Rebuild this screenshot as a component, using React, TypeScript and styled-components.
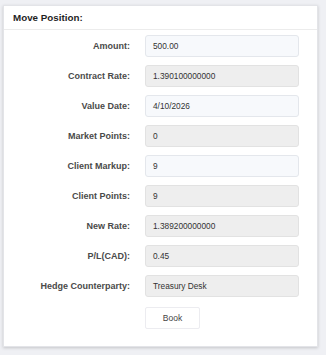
import React from 'react'
import styled, { createGlobalStyle } from 'styled-components'

const GlobalStyle = createGlobalStyle`
  html, body {
    margin: 0;
    padding: 0;
    background: #eff0f4;
    font-family: 'Liberation Sans', Arial, sans-serif;
  }
`

const Page = styled('div')`
  padding: 5px 8px 8px 3px;
  width: 326px;
  box-sizing: border-box;
`

const Panel = styled('div')`
  width: 315px;
  height: 342px;
  box-sizing: border-box;
  background: #ffffff;
  border: 1px solid #e3e4e8;
  box-shadow: 0 1px 3px rgba(0, 0, 0, 0.18);
  display: flex;
  flex-direction: column;
`

const Header = styled('div')`
  height: 23px;
  border-bottom: 1px solid #ececec;
  display: flex;
  align-items: center;
  padding-left: 9px;
  font-size: 9.8px;
  font-weight: 700;
  color: #1f1f1f;
`

const Body = styled('div')`
  display: grid;
  grid-template-columns: 126px 154px;
  column-gap: 15px;
  row-gap: 8px;
  padding-top: 5px;
  align-items: center;
`

const Label = styled('label')`
  text-align: right;
  font-size: 9px;
  font-weight: 700;
  color: #4a4a4a;
`

const Field = styled('div')<{ readOnly?: boolean }>`
  height: 22px;
  box-sizing: border-box;
  border: 1px solid ${p => (p.readOnly ? '#e2e2e2' : '#e4e7ec')};
  border-radius: 3px;
  background: ${p => (p.readOnly ? '#eeeeee' : '#f7f9fc')};
  display: flex;
  align-items: center;
  padding-left: 7px;
  font-size: 8.3px;
  color: #333;
`

const Button = styled('button')`
  grid-column: 2;
  justify-self: start;
  margin-top: 2px;
  width: 55px;
  height: 22px;
  background: #fff;
  border: 1px solid #ececf0;
  border-radius: 2px;
  font-family: inherit;
  font-size: 8.5px;
  color: #444;
  padding: 0;
`

const rows = [
  { label: 'Amount:', value: '500.00', readOnly: false },
  { label: 'Contract Rate:', value: '1.390100000000', readOnly: true },
  { label: 'Value Date:', value: '4/10/2026', readOnly: false },
  { label: 'Market Points:', value: '0', readOnly: true },
  { label: 'Client Markup:', value: '9', readOnly: false },
  { label: 'Client Points:', value: '9', readOnly: true },
  { label: 'New Rate:', value: '1.389200000000', readOnly: true },
  { label: 'P/L(CAD):', value: '0.45', readOnly: true },
  { label: 'Hedge Counterparty:', value: 'Treasury Desk', readOnly: true },
]

const App = () => (
  <Page>
    <GlobalStyle />
    <Panel>
      <Header>Move Position:</Header>
      <Body>
        {rows.map(r => (
          <React.Fragment key={r.label}>
            <Label>{r.label}</Label>
            <Field readOnly={r.readOnly}>{r.value}</Field>
          </React.Fragment>
        ))}
        <Button>Book</Button>
      </Body>
    </Panel>
  </Page>
)

export default App
